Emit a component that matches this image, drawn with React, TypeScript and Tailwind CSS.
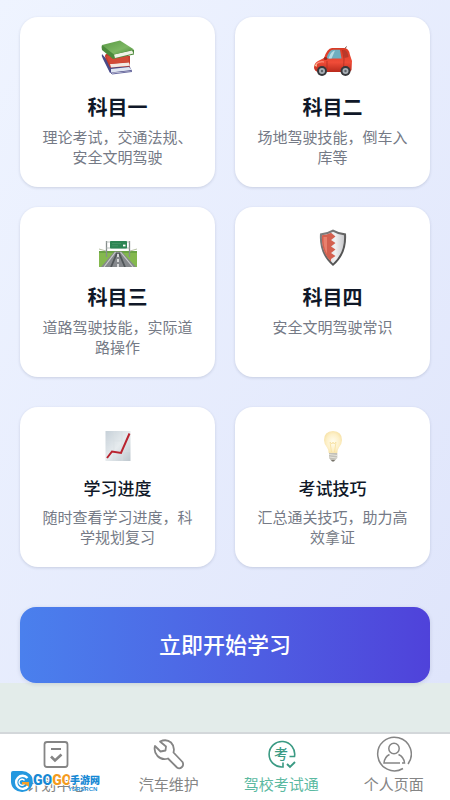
import type { ReactNode } from "react";

const sans = "font-['Liberation_Sans','Noto_Sans_CJK_SC',sans-serif]";

function BooksIcon() {
  return (
    <svg viewBox="0 0 40 40" className="h-full w-10" aria-hidden="true">
      <defs>
        <linearGradient id="bookGreen" x1="0" y1="0" x2="1" y2="1">
          <stop offset="0" stopColor="#5a9a45" />
          <stop offset="0.6" stopColor="#7db763" />
          <stop offset="1" stopColor="#4a8a3a" />
        </linearGradient>
      </defs>
      <path d="M4 17 Q3 19 5 22 L12 36 L34 34 L31 28 L12 26 Z" fill="#4a4a86" />
      <path d="M13 32 L31 30 L34 33 L13 35.500 Z" fill="#dfe5f2" />
      <path d="M11 34 L14 37 L34 34.500" fill="none" stroke="#6a6ba2" strokeWidth="1" />
      <path d="M8 17 Q6 19 8 22 L12 30.500 L32 29.500 L32 19 L14 16 Z" fill="#c23b2c" />
      <path d="M12 27 L31 25.500 L32 28.800 L13 30.500 Z" fill="#f3e9e2" />
      <path d="M8 19 L12 27 L31 25 L30 18 Z" fill="#d24a36" />
      <path d="M4 8 Q3 10 4 13 L15 22 L36 17.500 L36 13 L18 12 Z" fill="#4c8a3c" />
      <path d="M16 17.500 L34 13.500 L35.500 16.500 L17 21 Z" fill="#f0f2e6" />
      <path d="M4 8 L22 3.500 L36 12.500 L16 17.500 Z" fill="url(#bookGreen)" />
    </svg>
  );
}

function CarIcon() {
  return (
    <svg viewBox="0 0 40 40" className="h-full w-10" aria-hidden="true">
      <defs>
        <linearGradient id="carBody" x1="0" y1="0" x2="0" y2="1">
          <stop offset="0" stopColor="#d93a24" />
          <stop offset="0.6" stopColor="#ef4c38" />
          <stop offset="1" stopColor="#b92a1c" />
        </linearGradient>
      </defs>
      <path d="M31 13 L33.500 9.500" stroke="#6d4038" strokeWidth="1" />
      <path d="M1 31 Q1 26 5 24 L11 21 Q14 11.500 19 11 L31 11 Q36 11 37 18 L39 24 L38.500 33 Q38 35 35 35 L6 35 Q2 35 1 31 Z" fill="url(#carBody)" />
      <path d="M13.500 21.500 Q16 12.800 20 12.800 L27 12.800 L28.500 21.500 Z" fill="#6faec0" />
      <path d="M15.500 21.500 Q18 14 22 13.500 L18.500 21.500 Z" fill="#b6dbe3" />
      <path d="M30 13 L32 13 Q35 15 35.500 20 L31.500 21 Z" fill="#b73a2c" />
      <path d="M29.500 13 L31 22 L30.500 33 M14 24 L14 32" fill="none" stroke="#aa2b20" strokeWidth="0.7" />
      <path d="M3 27 Q7 24 11 25" fill="none" stroke="#ff9a84" strokeWidth="1.2" />
      <path d="M1.500 28 L4 27 L3.500 30 Z" fill="#f6d9a4" />
      <ellipse cx="12.500" cy="21.500" rx="1.800" ry="1.500" fill="#a42519" />
      <circle cx="9" cy="34" r="5" fill="#35373b" />
      <circle cx="9" cy="34" r="3" fill="#a9b0b6" />
      <circle cx="9" cy="34" r="1.200" fill="#5d6369" />
      <circle cx="32.500" cy="34" r="5" fill="#35373b" />
      <circle cx="32.500" cy="34" r="3" fill="#a9b0b6" />
      <circle cx="32.500" cy="34" r="1.200" fill="#5d6369" />
    </svg>
  );
}

function RoadIcon() {
  return (
    <svg viewBox="0 0 40 40" className="h-full w-10" aria-hidden="true">
      <rect x="1" y="24" width="38" height="16" fill="#84b84e" />
      <path d="M1 24 H39 V26 H1 Z" fill="#6aa344" />
      <path d="M16.500 24.500 L23.500 24.500 L38 40 L3 40 Z" fill="#85888c" />
      <path d="M17.500 25 L6 40 M22.500 25 L35 40" stroke="#c9ccca" strokeWidth="1.100" />
      <path d="M19 26 L13 40 M21 26 L27 40" stroke="#515659" strokeWidth="1.800" />
      <path d="M20 27 V30 M20 32 V35 M20 37 V40" stroke="#f4f4f4" strokeWidth="1.500" />
      <path d="M1 22 L8 24 M39 22 L32 24" stroke="#b6c0a4" strokeWidth="1" />
      <path d="M8.500 14 V30 M31.500 14 V30" stroke="#868d8c" strokeWidth="1.300" />
      <path d="M8 15 H32 M8 21 H32" stroke="#a4aeab" strokeWidth="0.800" />
      <rect x="12" y="14" width="17" height="7.500" rx="0.800" fill="#2d8554" />
      <path d="M14 16.500 H23 M14 18.800 H20" stroke="#469468" strokeWidth="0.900" />
      <path d="M25 18.500 H27.500" stroke="#ffffff" strokeWidth="1.800" />
    </svg>
  );
}

function ShieldIcon() {
  return (
    <svg viewBox="0 0 40 40" className="h-full w-10" aria-hidden="true">
      <defs>
        <linearGradient id="shieldRim" x1="0" y1="0" x2="1" y2="1">
          <stop offset="0" stopColor="#858585" />
          <stop offset="0.500" stopColor="#666666" />
          <stop offset="1" stopColor="#3f3f3f" />
        </linearGradient>
        <linearGradient id="shieldFace" x1="0" y1="0" x2="1" y2="0">
          <stop offset="0" stopColor="#c7c8ca" />
          <stop offset="0.600" stopColor="#f1f1f2" />
          <stop offset="1" stopColor="#c9c9cc" />
        </linearGradient>
      </defs>
      <path d="M20 2.500 Q26 6 33 6.500 Q34.500 27 20 39 Q5.500 27 7 6.500 Q14 6 20 2.500 Z" fill="url(#shieldRim)" />
      <path d="M20 4.800 Q25.500 8 31 8.300 Q32 25.500 20 36.500 Q8 25.500 9 8.300 Q14.500 8 20 4.800 Z" fill="url(#shieldFace)" />
      <path d="M18 5.800 Q14 8 9 8.300 Q8 25.500 18 34.500 L18 32 L22.500 29 L18 26 L22.500 22.500 L18 19.500 L22.500 16 L18 13 L22.500 9.500 Z" fill="#d4604f" />
      <path d="M10.500 10 Q10 20 14 27 L14 10 Z" fill="#e8806d" />
    </svg>
  );
}

function ChartIcon() {
  return (
    <svg viewBox="0 0 40 36" className="h-full w-10" aria-hidden="true">
      <defs>
        <linearGradient id="chartPaper" x1="0" y1="0" x2="1" y2="1">
          <stop offset="0" stopColor="#c6d0d8" />
          <stop offset="0.500" stopColor="#e6ebee" />
          <stop offset="1" stopColor="#bdc7ce" />
        </linearGradient>
      </defs>
      <rect x="7.500" y="4" width="25" height="30" fill="url(#chartPaper)" />
      <path d="M8 14 H32 M8 24 H32 M16 4 V34 M24 4 V34" stroke="#d8dfe3" strokeWidth="0.600" />
      <path d="M9 31 L14 24.500 L23 26 L31.500 6.500" fill="none" stroke="#b9232f" strokeWidth="2" />
    </svg>
  );
}

function BulbIcon() {
  return (
    <svg viewBox="0 0 40 36" className="h-full w-10" aria-hidden="true">
      <defs>
        <radialGradient id="bulbGlow" cx="0.500" cy="0.500" r="0.600">
          <stop offset="0" stopColor="#fffdf0" />
          <stop offset="0.600" stopColor="#fdf0c8" />
          <stop offset="1" stopColor="#f5dd9c" />
        </radialGradient>
      </defs>
      <path d="M20 4 Q29 4.500 29 13 Q29 17 26 20.500 Q24.500 22.500 24.300 26 H15.700 Q15.500 22.500 14 20.500 Q11 17 11 13 Q11 4.500 20 4 Z" fill="url(#bulbGlow)" />
      <path d="M18.500 25 L17 15 L19 17 L20 15 L21 17 L23 15 L21.500 25" fill="none" stroke="#f7e2a4" strokeWidth="0.900" />
      <path d="M16 26 H24.300 V31 L22 33.500 H18 L16 31 Z" fill="#c2c0b8" />
      <path d="M16 27.500 L24 28.500 M16 30 L24 31" stroke="#e8e6df" strokeWidth="0.900" />
      <path d="M18 33 H22 L21 34.500 H19 Z" fill="#77746b" />
    </svg>
  );
}

type CardData = { icon: ReactNode; title: string; text: string };

const subjects: CardData[] = [
  { icon: <BooksIcon />, title: "科目一", text: "理论考试，交通法规、安全文明驾驶" },
  { icon: <CarIcon />, title: "科目二", text: "场地驾驶技能，倒车入库等" },
  { icon: <RoadIcon />, title: "科目三", text: "道路驾驶技能，实际道路操作" },
  { icon: <ShieldIcon />, title: "科目四", text: "安全文明驾驶常识" },
];

const tools: CardData[] = [
  { icon: <ChartIcon />, title: "学习进度", text: "随时查看学习进度，科学规划复习" },
  { icon: <BulbIcon />, title: "考试技巧", text: "汇总通关技巧，助力高效拿证" },
];

const cardClass =
  "flex flex-col items-center rounded-[18px] bg-white px-5 pt-5 pb-[19px] text-center shadow-[0_1px_3px_rgba(30,41,80,0.16)]";

function SubjectCard({ icon, title, text }: CardData) {
  return (
    <article className={cardClass}>
      <div className="mb-[17px] h-10">{icon}</div>
      <h2 className="mb-1.5 text-[20px] leading-7 font-bold text-gray-900">{title}</h2>
      <p className="text-[15px] leading-5 text-[#757a86]">{text}</p>
    </article>
  );
}

function ToolCard({ icon, title, text }: CardData) {
  return (
    <article className={cardClass}>
      <div className="mb-[15px] h-9">{icon}</div>
      <h3 className="mb-1.5 text-[17px] leading-6 font-medium text-gray-900">{title}</h3>
      <p className="text-[15px] leading-5 text-[#757a86]">{text}</p>
    </article>
  );
}

function PlanIcon() {
  return (
    <svg viewBox="0 0 36 36" className="size-9" fill="none" stroke="currentColor" aria-hidden="true">
      <rect x="6.500" y="6" width="23" height="25" rx="2.500" strokeWidth="1.800" />
      <path d="M13 13 H23" strokeWidth="2" />
      <path d="M13 20.500 L17 24.500 L23.500 18.500" strokeWidth="2.600" />
    </svg>
  );
}

function WrenchIcon() {
  return (
    <svg viewBox="0 0 36 36" className="size-9" fill="none" stroke="currentColor" strokeWidth="1.800" strokeLinejoin="round" aria-hidden="true">
      <path d="M9 5.500 Q15.500 2.500 20 6.500 Q24 10.500 22.500 16.500 L31.500 26 Q33 29 31 31 Q28.500 33.500 26 31.500 L17 22.500 Q11 24.500 6.500 20 Q2.500 15.500 4 10 L9.500 15.500 L14.500 14.500 L15 10.500 Z" />
    </svg>
  );
}

function ExamIcon() {
  return (
    <svg viewBox="0 0 36 36" className="size-9" fill="none" stroke="currentColor" strokeWidth="1.600" aria-hidden="true">
      <path d="M20 26.500 V31 A12.800 12.800 0 1 1 31.500 20.500 H26.500" />
      <path d="M24 28 L27 31 L32 26" strokeWidth="1.900" />
      <text x="18" y="23" textAnchor="middle" fontSize="14" fontWeight="500" fill="currentColor" stroke="none">考</text>
    </svg>
  );
}

function ProfileIcon() {
  return (
    <svg viewBox="0 0 36 36" className="size-9" fill="none" stroke="currentColor" strokeWidth="1.500" aria-hidden="true">
      <path d="M27 32.500 A16.800 16.800 0 1 1 32 28" />
      <circle cx="18" cy="12.500" r="5.200" />
      <path d="M13.500 18.500 Q8.500 21 8 27 H24 M26 27 H28.500 Q28 21 22.500 18.500" />
    </svg>
  );
}

const tabs = [
  { label: "计划中心", icon: <PlanIcon />, active: false },
  { label: "汽车维护", icon: <WrenchIcon />, active: false },
  { label: "驾校考试通", icon: <ExamIcon />, active: true },
  { label: "个人页面", icon: <ProfileIcon />, active: false },
];

function Watermark() {
  return (
    <div className="pointer-events-none absolute bottom-1.5 left-2.5 flex items-center" aria-hidden="true">
      <svg viewBox="0 0 24 24" className="size-6">
        <path d="M3 1 H12 A11 10.500 0 1 1 1 12 V3 Q1 1 3 1 Z" fill="#2498df" />
        <path d="M17.500 8 A6.500 6.500 0 1 0 18 16" fill="none" stroke="#ffffff" strokeWidth="2.400" />
        <path d="M14.500 10.500 A3 3 0 1 0 14.500 14" fill="none" stroke="#ffffff" strokeWidth="1.300" />
        <path d="M12 12 H19 V17 L16 14.500 H12 Z" fill="#f6a12a" />
      </svg>
      <svg viewBox="0 0 70 24" className="h-6 w-[70px] overflow-visible">
        <g stroke="#ffffff" strokeWidth="2" strokeLinejoin="round" paintOrder="stroke" fontWeight="900">
          <text x="-1" y="15" fontFamily="'Liberation Sans Narrow', Roboto, sans-serif" fontSize="14" fill="#1688d4">
            GO<tspan fill="#f49b1d">GO</tspan>
          </text>
          <text x="36" y="14" fontSize="10" fill="#1688d4">手游网</text>
        </g>
        <text x="34" y="21" fontSize="6" fontWeight="700" fill="#2b93d8">YSRSRCN</text>
      </svg>
    </div>
  );
}

export default function App() {
  return (
    <div className={`flex min-h-screen flex-col bg-[#e3ecea] ${sans}`}>
      <main className="flex flex-col bg-linear-to-br from-[#eff4ff] to-[#dfe5fb] px-5">
        <div className="mb-[17px] rounded-full shadow-[0_0_3px_rgba(30,41,80,0.2)]" />
        <section className="grid grid-cols-2 gap-5">
          {subjects.map((card) => (
            <SubjectCard key={card.title} {...card} />
          ))}
        </section>
        <section className="mt-[30px] grid grid-cols-2 gap-5">
          {tools.map((card) => (
            <ToolCard key={card.title} {...card} />
          ))}
        </section>
        <button
          type="button"
          className="mt-10 h-[76px] rounded-2xl bg-linear-to-r from-[#4a80ed] to-[#4f42da] text-[22px] font-medium text-white shadow-[0_1px_4px_rgba(30,41,80,0.14)]"
        >
          立即开始学习
        </button>
      </main>
      <nav className="relative mt-auto grid grid-cols-4 border-t-2 border-[#d3d7da] bg-white pb-0.5">
        {tabs.map((tab) => (
          <button
            key={tab.label}
            type="button"
            aria-current={tab.active ? "page" : undefined}
            className={`flex flex-col items-center pt-0.5 text-[15px] leading-[26px] ${tab.active ? "text-[#3a9a83]" : "text-[#858585]"}`}
          >
            {tab.icon}
            <span className={tab.active ? "text-[#5bb9a1]" : ""}>{tab.label}</span>
          </button>
        ))}
        <Watermark />
      </nav>
    </div>
  );
}
